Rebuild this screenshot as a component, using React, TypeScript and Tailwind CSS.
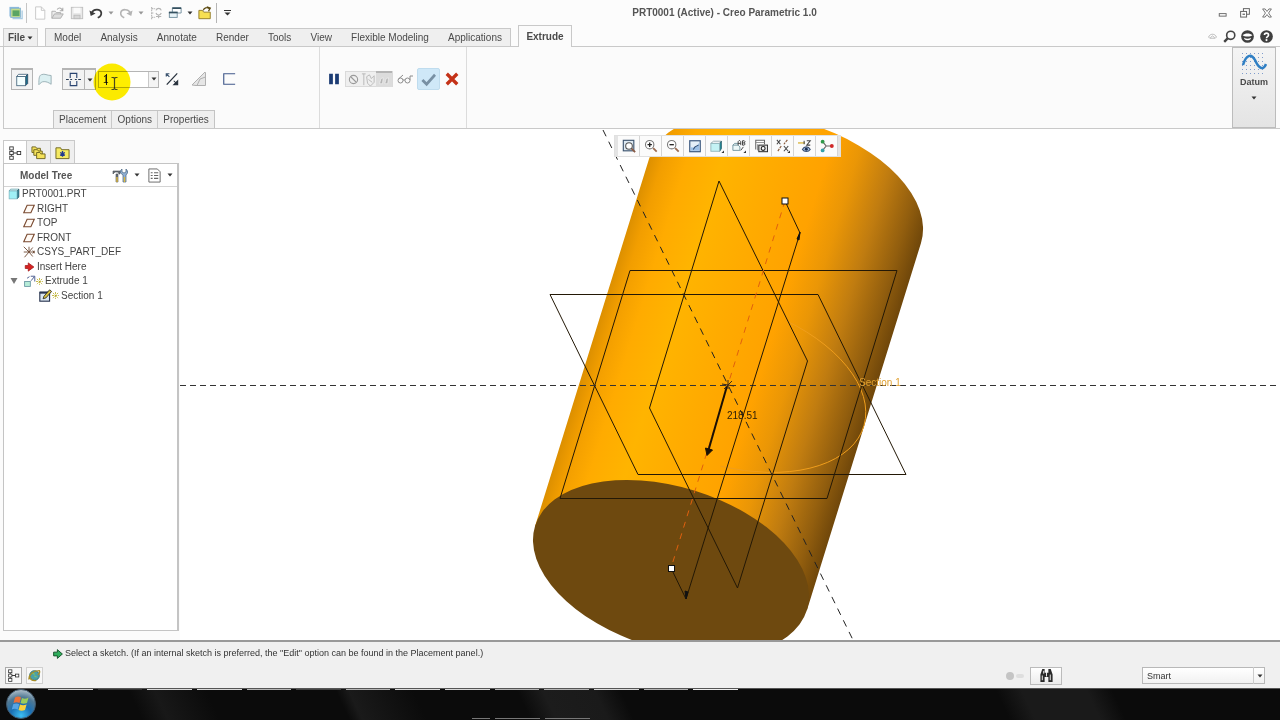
import React from 'react';

const RIBBON_TABS = ['Model', 'Analysis', 'Annotate', 'Render', 'Tools', 'View', 'Flexible Modeling', 'Applications'];

const PANEL_TABS = ['Placement', 'Options', 'Properties'];

interface IconProps {
  size?: number;
  children: React.ReactNode;
}

// All icons are drawn on a 16x16 grid
const Icon: React.FC<IconProps> = ({ size = 16, children }) => (
  <svg width={size} height={size} viewBox="0 0 16 16" fill="none" className="shrink-0" aria-hidden="true">
    {children}
  </svg>
);

const Caret: React.FC = () => (
  <svg width="6" height="4" viewBox="0 0 6 4" className="shrink-0" aria-hidden="true">
    <path d="M0.5 0.5h5L3 3.5z" fill="#333" />
  </svg>
);

interface ToolButtonProps {
  label: string;
  className?: string;
  children: React.ReactNode;
}

const ToolButton: React.FC<ToolButtonProps> = ({ label, className = '', children }) => (
  <button type="button" aria-label={label} className={`flex shrink-0 items-center justify-center ${className}`}>
    {children}
  </button>
);

const TreeNodesIcon: React.FC<{ size?: number }> = ({ size = 14 }) => (
  <Icon size={size}>
    <path d="M4 5v6M6 8h5" stroke="#333" strokeWidth="1.2" />
    <rect x="2" y="1" width="4" height="3.5" fill="#fff" stroke="#333" />
    <rect x="2" y="6.3" width="4" height="3.5" fill="#fff" stroke="#333" />
    <rect x="2" y="11.7" width="4" height="3.5" fill="#fff" stroke="#333" />
    <rect x="10.5" y="6.3" width="4" height="3.5" fill="#fff" stroke="#333" />
  </Icon>
);

const PlaneIcon: React.FC = () => (
  <Icon size={12}>
    <path d="M5.5 3h9.5l-4.5 10H1z" fill="#fffaf5" stroke="#7a4a30" strokeWidth="1.5" />
  </Icon>
);

const CubeIcon: React.FC = () => (
  <Icon size={12}>
    <path d="M1.5 4l2-2.5h11L12 4z" fill="#e8ffff" stroke="#5c9aa6" />
    <path d="M12 4l2.5-2.5v10.500L12 14.5z" fill="#1d7f94" stroke="#33606e" />
    <rect x="1.5" y="4" width="10.5" height="10.5" fill="#9ff0f6" stroke="#7fb6c0" />
  </Icon>
);

const TitleBar: React.FC = () => (
  <header className="flex h-[25px] shrink-0 items-center bg-[#fcfcfc]">
    <div className="flex h-full items-center pl-[6px]">
      <div className="flex w-[20px] justify-center">
        <Icon size={14}>
          <rect x="0.5" y="1" width="11" height="11" fill="#8dbbe0" />
          <rect x="2" y="2.5" width="11" height="10.5" fill="#c4dd8c" stroke="#7fb0d2" />
          <rect x="4" y="5" width="8" height="6.5" fill="#5aa564" />
          <path d="M4 14.5h11V5" stroke="#a9cbe2" strokeWidth="1.5" />
        </Icon>
      </div>
      <div className="mr-[4px] h-[20px] border-r border-[#c5c5c5]"></div>
      <ToolButton label="New" className="w-[17px]">
        <Icon size={14}>
          <path d="M3 1h6.5L13.5 5v10H3z" fill="#fff" stroke="#c4c4c4" />
          <path d="M9.5 1v4h4" stroke="#c4c4c4" />
        </Icon>
      </ToolButton>
      <ToolButton label="Open" className="w-[19px]">
        <Icon size={14}>
          <path d="M1 14V6h4l1 1.5h5V9" fill="#ededed" stroke="#aaa" />
          <path d="M1 14l3-5h10l-3 5z" fill="#ddd" stroke="#aaa" />
          <path d="M7 4c2-3 5-2 6 1M13.5 2v3.5H10" stroke="#aaa" strokeWidth="1.2" />
        </Icon>
      </ToolButton>
      <ToolButton label="Save" className="w-[19px]">
        <Icon size={14}>
          <rect x="1.5" y="1.5" width="13" height="13" fill="#e9e9e9" stroke="#bdbdbd" />
          <rect x="4" y="2" width="8" height="6" fill="#fafafa" />
          <rect x="4.5" y="10.5" width="7" height="4" fill="#d6d6d6" stroke="#bbb" />
        </Icon>
      </ToolButton>
      <ToolButton label="Undo" className="w-[20px]">
        <Icon size={14}>
          <path d="M3 8C5 3 13 3 14 7.500c0.500 3-1 4.500-4 6" stroke="#3c3c3c" strokeWidth="2" />
          <path d="M0.5 5l1.500 6.500 5.500-3z" fill="#3c3c3c" />
        </Icon>
      </ToolButton>
      <ToolButton label="Undo list" className="w-[10px] opacity-50">
        <Caret />
      </ToolButton>
      <ToolButton label="Redo" className="w-[20px]">
        <Icon size={14}>
          <path d="M13 8C11 3 3 3 2 7.500c-0.500 3 1 4.500 4 6" stroke="#b4b4b4" strokeWidth="1.800" />
          <path d="M15.500 5L14 11.500 8.500 8.500z" fill="#b4b4b4" />
        </Icon>
      </ToolButton>
      <ToolButton label="Redo list" className="w-[10px] opacity-50">
        <Caret />
      </ToolButton>
      <ToolButton label="Regenerate" className="w-[19px]">
        <Icon size={14}>
          <path d="M3 1v14M3 3h4M3 8h3M3 13h4" stroke="#b8b8b8" strokeWidth="1.3" strokeDasharray="2 1" />
          <path d="M8 5c1-3 5-3 6 0M14 8c-1 3-5 3-6 0M8 12h6M11 10v4" stroke="#b4b4b4" strokeWidth="1.3" />
        </Icon>
      </ToolButton>
      <ToolButton label="Windows" className="w-[19px]">
        <Icon size={14}>
          <path d="M5 7V2h10v6h-4" fill="#fff" stroke="#6a8898" />
          <path d="M5 2.500h10" stroke="#35505f" strokeWidth="1.800" />
          <rect x="1.500" y="7" width="9" height="6" fill="#e8f3f7" stroke="#6a8898" />
          <path d="M1 7.500h10" stroke="#35505f" strokeWidth="1.800" />
        </Icon>
      </ToolButton>
      <ToolButton label="Window list" className="w-[12px]">
        <Caret />
      </ToolButton>
      <ToolButton label="Close window" className="w-[18px]">
        <Icon size={14}>
          <path d="M1 14.500V5h4l1.500 2H14v7.500z" fill="#f7df52" stroke="#8b7420" />
          <path d="M6 5c1-3 4-4 7-2M10 1l4 1.500L12 6" stroke="#5c4a10" strokeWidth="1.500" />
        </Icon>
      </ToolButton>
      <div className="ml-[2px] h-[20px] border-r border-[#b5b5b5]"></div>
      <ToolButton label="Customize toolbar" className="w-[20px]">
        <svg width="7" height="6" viewBox="0 0 7 6" aria-hidden="true">
          <path d="M0 0.5h7" stroke="#333" />
          <path d="M0.500 2.500h6l-3 3z" fill="#333" />
        </svg>
      </ToolButton>
    </div>
    <h1 className="flex-1 text-center text-[10px] font-bold text-[#555]">PRT0001 (Active) - Creo Parametric 1.0</h1>
    <div className="flex items-center pr-[2px]">
      <ToolButton label="Minimize" className="w-[22px]">
        <Icon size={10}>
          <rect x="2" y="9" width="11" height="4" fill="#fff" stroke="#666" strokeWidth="1.500" />
        </Icon>
      </ToolButton>
      <ToolButton label="Restore" className="w-[22px]">
        <Icon size={10}>
          <rect x="5.500" y="1" width="9.500" height="9" fill="#fff" stroke="#666" strokeWidth="1.600" />
          <rect x="1" y="5.500" width="9.500" height="9" fill="#fff" stroke="#666" strokeWidth="1.600" />
          <path d="M4 10h4" stroke="#666" strokeWidth="2" />
        </Icon>
      </ToolButton>
      <ToolButton label="Close" className="w-[22px]">
        <Icon size={10}>
          <path d="M1 1.500h4L8 5.500l3-4h4L10.500 8l4.500 6.500h-4l-3-4-3 4H1L5.500 8z" fill="#fff" stroke="#666" strokeWidth="1.400" />
        </Icon>
      </ToolButton>
    </div>
  </header>
);

const TabRow: React.FC = () => (
  <nav className="flex h-[22px] shrink-0 items-end border-b border-[#c9c9c9] bg-[#fcfcfc] pl-[3px] text-[10px] text-[#4a4a4a]">
    <button
      type="button"
      className="flex h-[18px] w-[35px] items-center justify-center gap-[2px] border border-b-0 border-[#d0d0d0] bg-[#efefef] font-bold"
    >
      File
      <Caret />
    </button>
    <div className="ml-[7px] flex h-[18px] w-[466px] items-center justify-between border border-b-0 border-[#c9c9c9] bg-[#efefef] px-[8px]">
      {RIBBON_TABS.map(tab => (
        <button key={tab} type="button">
          {tab}
        </button>
      ))}
    </div>
    <button
      type="button"
      className="-mb-px ml-[7px] h-[22px] w-[54px] border border-b-0 border-[#c9c9c9] bg-[#fbfbfb] font-bold"
    >
      Extrude
    </button>
    <div className="mb-[3px] ml-auto flex items-center pr-[4px]">
      <ToolButton label="Minimize ribbon" className="w-[16px]">
        <Icon size={9}>
          <path d="M1 9c1-3 4-5 7-5s6 2 7 5l-2 2H3z" fill="#fff" stroke="#aaa" strokeWidth="1.400" />
          <path d="M4 10l4-3 4 3" stroke="#aaa" strokeWidth="1.400" />
        </Icon>
      </ToolButton>
      <ToolButton label="Search" className="w-[18px]">
        <Icon size={13}>
          <circle cx="9.500" cy="6.500" r="5" stroke="#444" strokeWidth="2" />
          <path d="M6 10l-4.500 4.500" stroke="#444" strokeWidth="3" />
        </Icon>
      </ToolButton>
      <ToolButton label="Learning" className="w-[19px]">
        <Icon size={13}>
          <circle cx="8" cy="8" r="7.800" fill="#3f3f3f" />
          <path d="M2 6.500c3-3 9-3 12 0-2 2-10 2-12 0z" fill="#fff" />
          <path d="M4 9.500c2 1.500 6 1.500 8 0v1.500c-2 2-6 2-8 0z" fill="#fff" />
        </Icon>
      </ToolButton>
      <ToolButton label="Help" className="w-[19px]">
        <Icon size={13}>
          <circle cx="8" cy="8" r="7.800" fill="#3f3f3f" />
          <path d="M5.500 6.200c0-3.200 5-3.200 5 0 0 2-2.500 1.800-2.500 3.800" stroke="#fff" strokeWidth="2" />
          <circle cx="8" cy="12.400" r="1.300" fill="#fff" />
        </Icon>
      </ToolButton>
    </div>
  </nav>
);

const DepthInput: React.FC = () => (
  <div className="relative ml-[2px] flex h-[17px] w-[61px] border border-[#b5b5b5] bg-white">
    <input
      aria-label="Depth value"
      defaultValue="1"
      className="w-[49px] bg-transparent pl-[4px] text-[10px] text-[#222] outline-none"
    />
    <button type="button" aria-label="Depth values" className="flex w-[11px] items-center justify-center border-l border-[#c8c8c8] bg-[#f4f4f4]">
      <Caret />
    </button>
    {/* Click highlight with the text cursor on top */}
    <svg
      width="38"
      height="38"
      viewBox="0 0 38 38"
      fill="none"
      className="pointer-events-none absolute -left-[6px] -top-[9px] mix-blend-multiply"
      aria-hidden="true"
    >
      <circle cx="19" cy="19" r="18.500" fill="#ffee00" />
      <path d="M13.500 11v11" stroke="#222" />
      <path d="M18.500 14.500h2l1 1 1-1h2M21.500 15.500v10M18.500 26.500h2l1-1 1 1h2" stroke="#4a4a20" strokeWidth="1.200" />
    </svg>
  </div>
);

const Ribbon: React.FC = () => (
  <section className="ml-[3px] flex h-[82px] shrink-0 border-b border-l border-[#c9c9c9] bg-[#fbfbfb] pr-[4px]">
    <div className="flex w-[316px] flex-col justify-between border-r border-[#dcdcdc]">
      <div className="mt-[20px] flex h-[24px] items-center pl-[7px]">
        <ToolButton label="Extrude as solid" className="h-[22px] w-[22px] border border-t-2 border-[#b4b4b4] bg-[#f3f3f3]">
          <Icon size={14}>
            <path d="M2 4l2-2.500h10.500L12 4z" fill="#fff" stroke="#4a6a80" />
            <path d="M12 4l2.500-2.500V12L12 14.500z" fill="#1e6f8a" stroke="#31506a" />
            <rect x="2" y="4" width="10" height="10.500" fill="#f4ffff" stroke="#4a6a80" />
          </Icon>
        </ToolButton>
        <ToolButton label="Extrude as surface" className="w-[23px]">
          <Icon size={14}>
            <path d="M1 14.500C1 8 1 4 4 3c4-1.500 6 1 11 1v10c-3-2-5-3-8-3-3 0-4 1.500-6 3.500z" fill="#dcf0f2" stroke="#94aab0" />
          </Icon>
        </ToolButton>
        <ToolButton label="Symmetric depth" className="ml-[6px] h-[22px] w-[22px] border border-r-0 border-t-2 border-[#b4b4b4] bg-[#f3f3f3]">
          <Icon size={15}>
            <path d="M0 8h3M4.500 8h2M9.500 8h2M13 8h3" stroke="#2d3f58" strokeWidth="1.200" />
            <path d="M4.500 6.500v-5h7v5M4.500 9.500v5h7v-5" stroke="#2a4470" strokeWidth="1.200" />
          </Icon>
        </ToolButton>
        <ToolButton label="Depth options" className="h-[22px] w-[12px] border border-t-2 border-[#b4b4b4] bg-[#f3f3f3]">
          <Caret />
        </ToolButton>
        <DepthInput />
        <ToolButton label="Flip direction" className="w-[25px]">
          <Icon size={14}>
            <path d="M2 14.500L14 1.500" stroke="#26303c" strokeWidth="1.400" />
            <path d="M1.500 5V2H5M2 2.500l3 3" stroke="#3c5470" strokeWidth="1.400" />
            <path d="M14.500 10v4.500H10zM13 13l-3-3" fill="#26303c" stroke="#26303c" strokeWidth="1.200" />
          </Icon>
        </ToolButton>
        <ToolButton label="Remove material" className="w-[30px]">
          <Icon size={16}>
            <path d="M1 14L13.500 1.500h1V14.500H5z" fill="#e6e6e6" stroke="#b0b0b0" />
            <path d="M6 14.500L9 8l5.500-2M1 14L14 1" stroke="#b0b0b0" />
          </Icon>
        </ToolButton>
        <ToolButton label="Thicken sketch" className="w-[30px]">
          <Icon size={14}>
            <path d="M15 2H2v12h13" stroke="#40588a" strokeWidth="1.300" />
          </Icon>
        </ToolButton>
      </div>
      <div className="ml-[49px] flex h-[18px] w-[162px] border border-b-0 border-[#c4c4c4] bg-[#efefef] text-[10px] text-[#4a4a4a]">
        {PANEL_TABS.map(tab => (
          <button key={tab} type="button" className="flex-auto border-r border-[#c9c9c9] last:border-r-0">
            {tab}
          </button>
        ))}
      </div>
    </div>
    <div className="w-[147px] border-r border-[#dcdcdc]">
      <div className="mt-[20px] flex h-[24px] items-center pl-[6px]">
        <ToolButton label="Pause" className="w-[15px]">
          <Icon size={12}>
            <path d="M1.500 1h5v14h-5zM9.500 1h5v14h-5z" fill="#1c3c74" />
          </Icon>
        </ToolButton>
        <div className="ml-[4px] flex h-[16px] w-[48px] items-center border border-[#dadada] bg-[#efefef]">
          <ToolButton label="No preview" className="w-[14px]">
            <Icon size={11}>
              <circle cx="8" cy="8" r="6" stroke="#9a9a9a" strokeWidth="1.600" />
              <path d="M4 4l8 8" stroke="#9a9a9a" strokeWidth="1.600" />
            </Icon>
          </ToolButton>
          <ToolButton label="Unattached preview" className="w-[16px]">
            <Icon size={15}>
              <path d="M1 2h4M3 2v12M6 5l3-2 2 4 3-3v7l-4 4-3-3zM8 8l4 3" stroke="#b8b8b8" />
            </Icon>
          </ToolButton>
          <ToolButton label="Attached preview" className="h-[16px] w-[16px] border-t-2 border-[#b4b4b4] bg-[#dcdcdc]">
            <Icon size={12}>
              <path d="M2 13l2-7 3-1-1 8zM9 13l2-7 3-1-1 8z" fill="#b4b4b4" stroke="#f0f0f0" />
            </Icon>
          </ToolButton>
        </div>
        <ToolButton label="Verify" className="w-[24px]">
          <Icon size={16}>
            <circle cx="3.500" cy="9.500" r="2.500" stroke="#8c8c8c" />
            <circle cx="10.500" cy="9.500" r="2.500" stroke="#8c8c8c" />
            <path d="M6 9h2M1.500 8L6 4M13 9V5h3" stroke="#8c8c8c" />
          </Icon>
        </ToolButton>
        <ToolButton label="OK" className="h-[22px] w-[23px] rounded-[2px] border border-[#bfdcee] bg-[#cfe8f8]">
          <Icon size={15}>
            <path d="M1.500 8.500l4.500 4.500 9-10" stroke="#7890a4" strokeWidth="3" />
          </Icon>
        </ToolButton>
        <ToolButton label="Cancel" className="w-[24px]">
          <Icon size={14}>
            <path d="M2 2l12 12M14 2L2 14" stroke="#c43218" strokeWidth="3.800" />
          </Icon>
        </ToolButton>
      </div>
    </div>
    <button
      type="button"
      className="ml-auto flex w-[44px] flex-col items-center border border-[#bcbcbc] bg-gradient-to-b from-[#f4f4f4] to-[#e4e4e4] pt-[3px] text-[9px] font-bold text-[#4a4a4a]"
    >
      <svg width="26" height="24" viewBox="0 0 26 24" fill="none" aria-hidden="true">
        <path d="M1 2.500h24M1 6.500h24M1 10.500h24M1 14.500h24M1 18.500h24M1 22.500h24" stroke="#7f9ccc" strokeDasharray="1 3" />
        <path d="M2 14C5 4 10 2 14 9c3 7 8 12 11 4" stroke="#2f7fc4" strokeWidth="2.500" />
      </svg>
      <span className="leading-[15px]">Datum</span>
      <span className="mt-[6px]">
        <Caret />
      </span>
    </button>
  </section>
);

interface TreeItem {
  label: string;
  indent: string;
  icon: React.ReactNode;
}

const Spark: React.FC = () => (
  <Icon size={7}>
    <path d="M8 0v16M0 8h16M2 2l12 12M14 2L2 14" stroke="#b8aa20" strokeWidth="1.800" strokeDasharray="5 2" />
  </Icon>
);

const TREE_ITEMS: TreeItem[] = [
  { label: 'PRT0001.PRT', indent: 'pl-[4px]', icon: <CubeIcon /> },
  { label: 'RIGHT', indent: 'pl-[19px]', icon: <PlaneIcon /> },
  { label: 'TOP', indent: 'pl-[19px]', icon: <PlaneIcon /> },
  { label: 'FRONT', indent: 'pl-[19px]', icon: <PlaneIcon /> },
  {
    label: 'CSYS_PART_DEF',
    indent: 'pl-[19px]',
    icon: (
      <Icon size={12}>
        <path d="M8 8L1 1M8 8h7M8 8l-6 7M8 8L8 1M1 8h7M8 8l5 6M13 2L8 8M13 6l3 4M16 6l-3 4" stroke="#6e4a34" strokeWidth="1.200" />
      </Icon>
    ),
  },
  {
    label: 'Insert Here',
    indent: 'pl-[19px]',
    icon: (
      <Icon size={12}>
        <path d="M3 6h4V2.500l7.500 5.500L7 13.500V10H3z" fill="#d62222" stroke="#a01818" />
      </Icon>
    ),
  },
  {
    label: 'Extrude 1',
    indent: 'pl-[6px]',
    icon: (
      <>
        <svg width="8" height="6" viewBox="0 0 8 6" className="mr-[5px]" aria-hidden="true">
          <path d="M0.500 0h7L4 6z" fill="#777" />
        </svg>
        <Icon size={13}>
          <rect x="2" y="8" width="7" height="6" fill="#b6ecd8" stroke="#5f8f9c" />
          <path d="M5 4l3-2M10 7l4-5M9.500 1.500H14.500V8" stroke="#4d5f90" strokeWidth="1.200" />
        </Icon>
        <Spark />
      </>
    ),
  },
  {
    label: 'Section 1',
    indent: 'pl-[35px]',
    icon: (
      <>
        <Icon size={13}>
          <rect x="1" y="4" width="12" height="11" fill="#dbe7f2" stroke="#2a3550" strokeWidth="1.400" />
          <path d="M1 4.500h12" stroke="#2a3550" strokeWidth="2.500" />
          <path d="M5 12l1-3 7-8 2.500 2-7 8z" fill="#d8c040" stroke="#222" />
        </Icon>
        <Spark />
      </>
    ),
  },
];

const ModelTree: React.FC = () => (
  <aside className="flex w-[180px] shrink-0 flex-col bg-[#fbfbfb] pb-[9px] pl-[3px] pr-px pt-[11px]">
    <div className="flex h-[23px] w-[72px] border border-b-0 border-[#c9c9c9]">
      <ToolButton label="Model tree" className="-mb-px w-[22px] bg-white">
        <TreeNodesIcon />
      </ToolButton>
      <ToolButton label="Folder browser" className="w-[24px] border-l border-[#c9c9c9] bg-[#efefef]">
        <Icon size={15}>
          <path d="M1 8V2h4l1 1.500h4V8z" fill="#f5e25a" stroke="#6f6520" />
          <path d="M3 11V5h4l1 1.500h4V11z" fill="#f5e25a" stroke="#6f6520" />
          <path d="M6 14.500V8h3.500l1 1.500H15v5z" fill="#f5e25a" stroke="#6f6520" />
        </Icon>
      </ToolButton>
      <ToolButton label="Favorites" className="w-[24px] border-l border-[#c9c9c9] bg-[#efefef]">
        <Icon size={15}>
          <path d="M1 14.500V3h5l1 2h8v9.500z" fill="#f5ea62" stroke="#6f6520" />
          <path d="M8 6.500v6M5.500 8l5 3M10.500 8l-5 3" stroke="#223a90" strokeWidth="1.400" />
        </Icon>
      </ToolButton>
    </div>
    <div className="flex-1 border border-r-2 border-[#c4c4c4] bg-white">
      <div className="flex h-[23px] items-center border-b border-[#d4d4d4] pl-[16px]">
        <h2 className="w-[92px] text-[10px] font-bold text-[#555]">Model Tree</h2>
        <ToolButton label="Tree settings" className="w-[18px]">
          <Icon size={16}>
            <path d="M1 4h7v3H7L6 5H3L1 7zM4 7h2v8H4z" fill="#6a7078" stroke="#4a5058" strokeWidth="0.600" />
            <path d="M10 2v3l2 1 2-1V2l1.500 2v2L14 8v7h-3V8L8.500 6V3.500z" fill="#8fb0d4" stroke="#46637f" strokeWidth="0.700" />
            <path d="M5 10v5M12.500 10v5" stroke="#e0b93c" strokeWidth="1.400" />
          </Icon>
        </ToolButton>
        <ToolButton label="Settings list" className="w-[16px]">
          <Caret />
        </ToolButton>
        <ToolButton label="Show" className="w-[18px]">
          <Icon size={15}>
            <path d="M2 1h9l3 3v11H2z" fill="#fff" stroke="#666" />
            <path d="M4 5h2M7.500 5H12M4 8h2M7.500 8H12M4 11h2M7.500 11H12" stroke="#666" strokeWidth="1.200" />
          </Icon>
        </ToolButton>
        <ToolButton label="Show list" className="w-[14px]">
          <Caret />
        </ToolButton>
      </div>
      <ul className="grid h-[116px] grid-rows-8 text-[10px] leading-[14px] text-[#444]">
        {TREE_ITEMS.map(item => (
          <li key={item.label} className={`flex items-center gap-[2px] whitespace-nowrap ${item.indent}`}>
            <span className="flex items-center">{item.icon}</span>
            <span>{item.label}</span>
          </li>
        ))}
      </ul>
    </div>
  </aside>
);

const VIEW_TOOLS: { label: string; icon: React.ReactNode }[] = [
  {
    label: 'Refit',
    icon: (
      <>
        <rect x="1.500" y="1.500" width="12" height="12" fill="#dfeaf2" stroke="#3e5570" strokeWidth="1.300" />
        <circle cx="8" cy="8" r="3.800" fill="#fff" stroke="#555" strokeWidth="1.200" />
        <path d="M11 11l4 4" stroke="#8a5a44" strokeWidth="2" />
      </>
    ),
  },
  {
    label: 'Zoom in',
    icon: (
      <>
        <circle cx="6.500" cy="6.500" r="4.800" fill="#fff" stroke="#777" strokeWidth="1.200" />
        <path d="M4 6.500h5M6.500 4v5" stroke="#222" strokeWidth="1.500" />
        <path d="M10.500 10.500l4 4" stroke="#9a6a50" strokeWidth="2" />
      </>
    ),
  },
  {
    label: 'Zoom out',
    icon: (
      <>
        <circle cx="6.500" cy="6.500" r="4.800" fill="#fff" stroke="#777" strokeWidth="1.200" />
        <path d="M4 6.500h5" stroke="#222" strokeWidth="1.500" />
        <path d="M10.500 10.500l4 4" stroke="#9a6a50" strokeWidth="2" />
      </>
    ),
  },
  {
    label: 'Repaint',
    icon: (
      <>
        <rect x="2" y="2" width="12" height="12.500" fill="#e4eff8" stroke="#3f5c80" strokeWidth="1.400" />
        <path d="M3 13.500V9c5 2 7-1 10-5v9.500z" fill="#9cc0e6" />
        <path d="M6 12l2-3 4-2" stroke="#2f4c70" strokeWidth="1.200" />
      </>
    ),
  },
  {
    label: 'Display style',
    icon: (
      <>
        <path d="M1 5l3-2.500h9L11 5z" fill="#fff" stroke="#8ba2aa" />
        <path d="M11 5l2-2.500V11l-2 3z" fill="#1d8a96" stroke="#2c6470" />
        <rect x="1" y="5" width="10" height="9" fill="#c4f2f4" stroke="#8fb2b8" />
        <path d="M16 13v3h-3z" fill="#333" />
      </>
    ),
  },
  {
    label: 'Saved orientations',
    icon: (
      <>
        <path d="M1 13V7l2-2h4M1 7h6l2 2v4H1" fill="#eef8f8" stroke="#6a8f9a" />
        <path d="M7 7V3l1.500-1.500L10 3v4M7 5h3M12 7V2h2l1 1.200-1 1.300 1 1.200L14 7zM12 4.500h2M10 13l3-4" stroke="#333" />
        <path d="M16 13v3h-3z" fill="#333" />
      </>
    ),
  },
  {
    label: 'View manager',
    icon: (
      <>
        <path d="M2 12V1.500h10V6" fill="#fff" stroke="#666" strokeWidth="1.200" />
        <path d="M2 4h10M4 6v7" stroke="#888" />
        <rect x="5.500" y="7" width="10" height="7.500" fill="#e4e4e4" stroke="#333" strokeWidth="1.200" />
        <circle cx="10.500" cy="10.800" r="2.200" fill="#fff" stroke="#222" strokeWidth="1.200" />
      </>
    ),
  },
  {
    label: 'Datum display filters',
    icon: (
      <>
        <path d="M1 1l4 5M5 1L1 6M9 8l5 6M14 8l-5 6" stroke="#444" strokeWidth="1.200" />
        <path d="M13 1l-4 5M6 8l-4 6" stroke="#8a5a3a" strokeWidth="1.300" strokeDasharray="3 1" />
        <path d="M16 13v3h-3z" fill="#333" />
      </>
    ),
  },
  {
    label: 'Annotation display',
    icon: (
      <>
        <path d="M0 4.500h8" stroke="#d8b438" strokeWidth="1.500" />
        <path d="M7 2v4M10 2h4l-4 5h4" stroke="#444" strokeWidth="1.200" />
        <path d="M5 12c2-4 7-4 9 0-2 3-7 3-9 0z" fill="#a6c3e4" stroke="#3a4e70" strokeWidth="1.200" />
        <circle cx="9.500" cy="11.800" r="1.700" fill="#1c2c50" />
      </>
    ),
  },
  {
    label: 'Spin center',
    icon: (
      <>
        <path d="M3 3l4 5-4 5M7 8h6" stroke="#666" strokeWidth="1.300" />
        <circle cx="3" cy="3" r="2.200" fill="#2f9a4a" />
        <circle cx="3" cy="13" r="2.200" fill="#35a0a8" />
        <circle cx="13.500" cy="8" r="2.200" fill="#d02828" />
      </>
    ),
  },
];

const GraphicsToolbar: React.FC = () => (
  <div className="absolute left-[434px] top-[6px] flex h-[22px] border border-[#e0e0e0] bg-[#e4e4e4] pl-[3px] pr-[2px]">
    {VIEW_TOOLS.map(tool => (
      <ToolButton key={tool.label} label={tool.label} className="w-[22px] border-r border-[#d4d4d4] bg-[#fbfbfb]">
        <Icon size={14}>{tool.icon}</Icon>
      </ToolButton>
    ))}
  </div>
);

const ModelView: React.FC = () => (
  <div className="relative min-w-0 flex-1 overflow-hidden bg-white">
    <svg
      className="block h-full w-full"
      viewBox="180 129 1100 511"
      preserveAspectRatio="xMidYMid slice"
      fill="none"
      role="img"
      aria-label="Extruded cylinder preview"
    >
      <defs>
        <linearGradient id="bodyShade" gradientUnits="userSpaceOnUse" x1="535" y1="526" x2="807" y2="610">
          <stop offset="0" stopColor="#dc8f00" />
          <stop offset="0.050" stopColor="#f29e00" />
          <stop offset="0.130" stopColor="#ffab00" />
          <stop offset="0.250" stopColor="#ffb400" />
          <stop offset="0.420" stopColor="#ffab00" />
          <stop offset="0.600" stopColor="#ffa200" />
          <stop offset="0.700" stopColor="#ea9606" />
          <stop offset="0.820" stopColor="#c07c10" />
          <stop offset="0.930" stopColor="#925e0e" />
          <stop offset="1" stopColor="#70470a" />
        </linearGradient>
      </defs>

      {/* Cylinder body and its near cap */}
      <path d="M535.100 526L649 159A142.300 80.900 17.200 0 1 921 243L807 610z" fill="url(#bodyShade)" />
      <ellipse cx="671" cy="568" rx="142.300" ry="80.900" transform="rotate(17.200 671 568)" fill="#6e490f" />

      {/* Sketched section */}
      <path d="M786.300 320.800A142.300 80.900 17.200 0 1 720.700 466.300" stroke="#f09e1c" />

      {/* Datum planes */}
      <g stroke="#231806">
        <path d="M630 270.500H897L827 498.500H560z" />
        <path d="M550 294.500H818L906 474.500H638z" />
        <path d="M719 181L807.500 361 737.500 588 649.500 408z" />
      </g>

      {/* Reference axes */}
      <path d="M180 385.500H1280" stroke="#333" strokeDasharray="6 4" />
      <path d="M603 130L853 640" stroke="#222" strokeDasharray="7 6" />
      <path d="M785 201L671 568" stroke="#e0600e" strokeDasharray="6 6" />

      {/* Depth dimension with its drag handles */}
      <path d="M785 201L800 233 686 599 671 568" stroke="#231806" />
      <path d="M800 232l-3 7 2 1zM686 599l-1-8 3 1z" fill="#111" stroke="#111" />
      <rect x="782" y="198" width="6" height="6" fill="#fff" stroke="#111" />
      <rect x="668.500" y="565.500" width="6" height="6" fill="#fff" stroke="#111" />
      <path d="M727 386L708.500 450" stroke="#1a1005" strokeWidth="2" />
      <path d="M705.500 448l7 2-5.500 5.500z" fill="#1a1005" stroke="#1a1005" />
      <path d="M722 384l12 2M728 380v9M724 389l8-8" stroke="#3a2a1a" />
      <text x="727" y="419" fontSize="10" fill="#2a1c08" fontFamily="Liberation Sans, sans-serif">
        218.51
      </text>
      <text x="859" y="386" fontSize="10" fill="#e0a030" fontFamily="Liberation Sans, sans-serif">
        Section 1
      </text>
    </svg>
    <GraphicsToolbar />
  </div>
);

const StatusBar: React.FC = () => (
  <footer className="flex h-[48px] shrink-0 flex-col border-t-2 border-[#999] bg-[#f0f0f0] text-[9px] text-[#333]">
    <p className="flex h-[23px] items-center gap-[2px] pl-[53px]">
      <Icon size={10}>
        <path d="M1 5h6V1l8 7-8 7v-4H1z" fill="#2fae5c" stroke="#14502a" strokeWidth="1.500" />
      </Icon>
      Select a sketch. (If an internal sketch is preferred, the "Edit" option can be found in the Placement panel.)
    </p>
    <div className="flex h-[21px] items-center pl-[5px] pr-[15px]">
      <ToolButton label="Toggle model tree" className="h-[17px] w-[17px] border border-[#aaa] bg-[#f8f8f8]">
        <TreeNodesIcon size={13} />
      </ToolButton>
      <ToolButton label="Toggle browser" className="ml-[4px] h-[17px] w-[17px] border border-[#d0d0d0] bg-[#f8f8f8]">
        <Icon size={13}>
          <circle cx="8" cy="8" r="6" fill="#4aa0a8" stroke="#2c6a70" />
          <path d="M4 5c3-2 5 0 4 3s2 2 4 2" fill="#7fc06a" />
          <path d="M1 13C1 7 6 2 14 2c1 2 0 4-2 5M2 9c0 4 4 6 8 5" stroke="#a88e28" strokeWidth="1.600" />
        </Icon>
      </ToolButton>
      <div className="ml-auto mr-[6px] flex h-[16px] items-center gap-[2px]">
        <span className="h-[8px] w-[8px] rounded-full bg-[#c4c4c4]"></span>
        <span className="h-[4px] w-[8px] rounded-full bg-[#dedede]"></span>
      </div>
      <ToolButton label="Find" className="mr-[80px] h-[18px] w-[32px] border border-[#bbb] bg-gradient-to-b from-white to-[#ececec]">
        <Icon size={15}>
          <path d="M1.500 15V7l2-6h2.500v4h4V1h2.500l2 6v8h-4.500V9.500H6V15z" fill="#2a2a2a" />
          <path d="M3.500 8v5M12 7v6M8 4v5M5 3v3" stroke="#f4f4f4" />
        </Icon>
      </ToolButton>
      <div className="relative">
        <select
          aria-label="Selection filter"
          className="block h-[17px] w-[123px] appearance-none border border-[#b8b8b8] bg-gradient-to-b from-white to-[#f1f1f1] pl-[4px] text-[9px] leading-[14px] outline-none"
        >
          <option>Smart</option>
        </select>
        <span className="pointer-events-none absolute inset-y-0 right-0 flex w-[12px] items-center justify-center border-l border-[#ccc]">
          <Caret />
        </span>
      </div>
    </div>
  </footer>
);

// Top highlights of the taskbar slots, left to right
const SLOT_SHADES = [
  'bg-[#d8d8d8]',
  'bg-[#333]',
  'bg-[#d8d8d8]',
  'bg-[#d8d8d8]',
  'bg-[#b4b4b4]',
  'bg-[#444]',
  'bg-[#b4b4b4]',
  'bg-[#d8d8d8]',
  'bg-[#d8d8d8]',
  'bg-[#b4b4b4]',
  'bg-[#b4b4b4]',
  'bg-[#d8d8d8]',
  'bg-[#b4b4b4]',
  'bg-[#eee]',
];

const TaskBar: React.FC = () => (
  <div className="flex h-[32px] shrink-0 border-t border-[#555] bg-[#0b0b0b] bg-[linear-gradient(65deg,#0b0b0b_11%,#181818_13%,#0b0b0b_17%,#0b0b0b_27%,#1a1a1a_28%,#0b0b0b_33%,#0b0b0b_41%,#1c1c1c_43%,#1a1a1a_47%,#0b0b0b_49%,#0b0b0b_78%,#1a1a1a_80%,#1a1a1a_85%,#0b0b0b_87%)]">
    <button type="button" aria-label="Start" className="ml-[6px] h-[30px] w-[30px]">
      <svg width="30" height="30" viewBox="0 0 30 30" aria-hidden="true">
        <defs>
          <radialGradient id="orb" cx="0.500" cy="0.900" r="0.900">
            <stop offset="0" stopColor="#3cc0f4" />
            <stop offset="0.400" stopColor="#1b70b4" />
            <stop offset="0.700" stopColor="#4f7894" />
            <stop offset="1" stopColor="#b4c2cc" />
          </radialGradient>
        </defs>
        <circle cx="15" cy="15" r="14.500" fill="url(#orb)" stroke="#40586c" />
        <path d="M9 8.500c2.500-1.500 4.500-1 6 0l-1.500 5.500c-2-1-4-1-6 0z" fill="#ec7038" />
        <path d="M16 9c2 1 4 1 6.500-0.500L21 14c-2.500 1-4.500 1-6.500 0z" fill="#9ccc5a" />
        <path d="M7.200 15.300c2.300-1 4.300-1 6 0L11.800 20.500c-2-1-4-1-6 0z" fill="#58a4e4" />
        <path d="M14 15.600c2 1 4.200 1 6.600 0L19 21c-2.300 1-4.500 1-6.500 0z" fill="#fbd13c" />
      </svg>
    </button>
    <div className="ml-[12px] flex w-[690px] flex-col justify-between">
      <div className="flex gap-[5px]">
        {SLOT_SHADES.map((shade, index) => (
          <div key={index} className={`h-px flex-1 ${shade}`}></div>
        ))}
      </div>
      <div className="mb-px ml-[424px] flex gap-[5px]">
        <div className="h-px w-[18px] bg-[#777]"></div>
        <div className="h-px w-[45px] bg-[#777]"></div>
        <div className="h-px w-[45px] bg-[#777]"></div>
      </div>
    </div>
  </div>
);

const App: React.FC = () => (
  <div className="flex h-screen flex-col overflow-hidden bg-[#fbfbfb] font-['Liberation_Sans',Arial,sans-serif]">
    <TitleBar />
    <TabRow />
    <Ribbon />
    <main className="flex min-h-0 flex-1">
      <ModelTree />
      <ModelView />
    </main>
    <StatusBar />
    <TaskBar />
  </div>
);

export default App;
